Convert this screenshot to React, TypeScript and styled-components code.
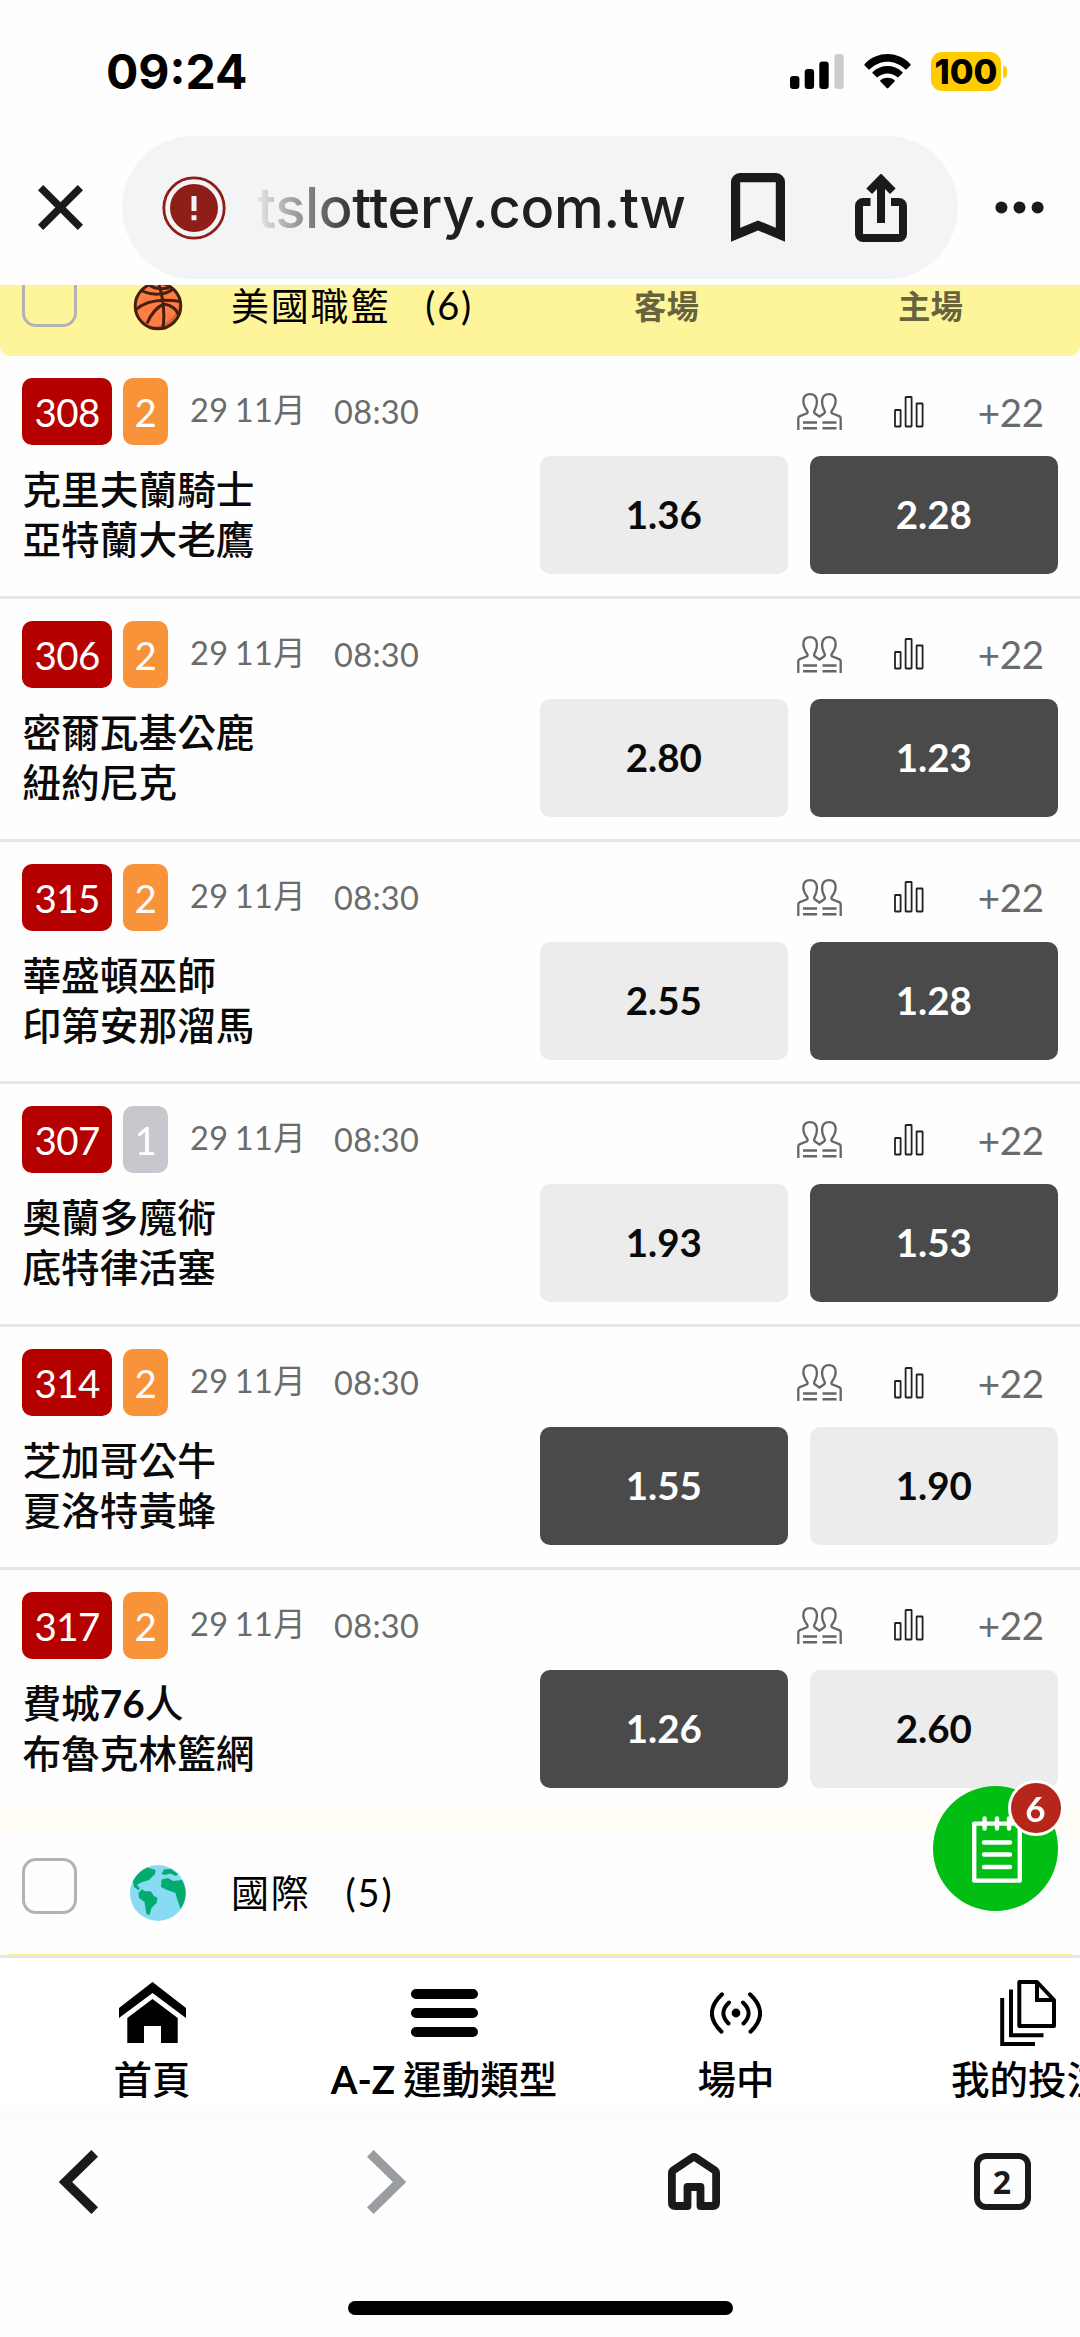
import React from 'react';
import styled, { createGlobalStyle } from 'styled-components';

const GlobalStyle = createGlobalStyle`
  * { box-sizing: border-box; }
  html, body { margin: 0; padding: 0; background: #fefefe; }
  body { font-family: Lato, "Noto Sans CJK TC", sans-serif; color: #000; overflow: hidden; }
  svg { display: block; flex: none; }
`;

const Screen = styled.div`
  width: 1080px;
  height: 2337px;
  display: flex;
  flex-direction: column;
  overflow: hidden;
  background: #fefefe;
`;

/* ---------- phone status bar ---------- */

const StatusBar = styled.header`
  height: 136px;
  flex: none;
  display: flex;
  align-items: flex-start;
  justify-content: space-between;
  padding: 42px 73px 0 106px;
`;

const Clock = styled.time`
  font: 700 48px/60px Inter, sans-serif;
`;

const StatusIcons = styled.div`
  display: flex;
  align-items: flex-start;
  padding-top: 10px;
`;

const SignalIcon = styled.svg`
  margin: 2px 20px 0 0;
`;

const WifiSvg = styled.svg`
  margin: 2px 20px 0 0;
`;

const Battery = styled.div`
  width: 70px;
  height: 39px;
  border-radius: 11px;
  background: #ffcc00;
  display: flex;
  align-items: center;
  justify-content: center;
  font: 800 34.5px/39px Inter, sans-serif;
`;

const BatteryNub = styled.div`
  width: 4px;
  height: 12px;
  margin: 14px 0 0 2px;
  border-radius: 0 6px 6px 0;
  background: #ffcc00;
`;

/* ---------- browser address bar ---------- */

const AddressBar = styled.div`
  height: 149px;
  flex: none;
  display: flex;
  align-items: flex-start;
`;

const BarButton = styled.button<{ $w: number; $pad?: number }>`
  width: ${(p) => p.$w}px;
  height: 143px;
  padding: 0 ${(p) => p.$pad ?? 0}px 0 0;
  border: 0;
  background: none;
  display: flex;
  align-items: center;
  justify-content: center;
`;

const UrlPill = styled.div`
  width: 836px;
  height: 143px;
  border-radius: 72px;
  background: #f3f4f6;
  display: flex;
  align-items: center;
  padding-left: 40px;
`;

const Url = styled.div`
  width: 428px;
  margin-left: 31px;
  font: 500 56px/80px Inter, sans-serif;
  letter-spacing: -0.35px;
  color: #1f1f1f;
  white-space: nowrap;
  mask-image: linear-gradient(90deg, rgba(0, 0, 0, 0.06), #000 105px);
`;

const PillIcon = styled.div<{ $gap: number }>`
  margin-left: ${(p) => p.$gap}px;
`;

/* ---------- page ---------- */

const Viewport = styled.main`
  height: 1670px;
  flex: none;
  overflow: hidden;
  background: #fffdf5;
`;

const LeagueHeader = styled.div<{ $active?: boolean }>`
  height: ${(p) => (p.$active ? 111 : 122.25)}px;
  margin-top: ${(p) => (p.$active ? -40 : 22)}px;
  display: flex;
  align-items: flex-start;
  padding: 26px 22px 0;
  border-radius: 11px;
  background: ${(p) => (p.$active ? '#fef49a' : '#fefefe')};
`;

const CheckBox = styled.span`
  width: 55px;
  height: 56px;
  flex: none;
  border: 3px solid #b3b3b3;
  border-radius: 14px;
`;

const SportIcon = styled.div`
  width: 56px;
  height: 56px;
  flex: none;
  margin: 7px 0 0 53px;
  display: flex;
  align-items: center;
  justify-content: center;
`;

const LeagueName = styled.div`
  margin: 15px 0 0 45px;
  width: 358px;
  flex: none;
  font-size: 38px;
  line-height: 39px;
  letter-spacing: 1.8px;
  display: flex;
  gap: 35px;
`;

const ColumnTitle = styled.div`
  width: 155px;
  flex: none;
  padding-top: 11px;
  text-align: center;
  font: 700 32.5px/50px Lato, "Noto Sans CJK TC", sans-serif;
  color: rgba(0, 0, 0, 0.6);
  & + & {
    margin-left: 109px;
  }
`;

/* top edge of the next highlighted league, just above the tab bar */
const NextLeagueEdge = styled.div`
  height: 8px;
  margin: 0 8px;
  background: #fef49a;
`;

const Match = styled.article`
  height: 242.75px;
  border-top: 3px solid #e5e6e9;
  background: #fefefe;
  padding: 22px 22.4px;
  display: flex;
  flex-direction: column;
  gap: 11px;
  &:first-of-type {
    height: 239.75px;
    border-top: 0;
    border-radius: 11px 11px 0 0;
  }
  &:last-of-type {
    border-radius: 0 0 11px 11px;
  }
`;

const MatchMeta = styled.div`
  height: 67px;
  display: flex;
  align-items: center;
`;

const Chip = styled.span<{ $bg: string; $w: number }>`
  width: ${(p) => p.$w}px;
  height: 67px;
  margin-right: 11px;
  padding-top: 2px;
  border-radius: 10px;
  background: ${(p) => p.$bg};
  color: #fff;
  font-size: 38.5px;
  line-height: 65px;
  text-align: center;
  letter-spacing: -0.6px;
`;

const DateText = styled.span`
  width: 131px;
  margin-left: 11px;
  padding-bottom: 3px;
  font-size: 32.5px;
  line-height: 40px;
  letter-spacing: 0.4px;
  word-spacing: -2.4px;
  color: #6b6b6b;
  white-space: nowrap;
`;

const TimeText = styled.span`
  margin-left: 13px;
  padding-top: 1px;
  font-size: 32.5px;
  line-height: 40px;
  letter-spacing: 0.35px;
  color: #6b6b6b;
`;

const MetaRight = styled.div`
  margin-left: auto;
  width: 261px;
  display: flex;
  align-items: center;
`;

const More = styled.span`
  margin-left: auto;
  padding: 0 14px 0 0;
  font-size: 38.5px;
  line-height: 60px;
  letter-spacing: -0.4px;
  color: #6b6b6b;
`;

const MatchBody = styled.div`
  display: flex;
  align-items: center;
  gap: 22.4px;
`;

const Teams = styled.div`
  flex: 1;
  padding-bottom: 2px;
  font-size: 38.7px;
  line-height: 50px;
  font-weight: 500;
  color: #0a0a0a;
`;

const Strong = styled.span`
  font-weight: 700;
`;

const Odd = styled.button<{ $picked?: boolean }>`
  width: 247.6px;
  height: 118px;
  padding: 0 0 2px;
  border: 0;
  border-radius: 10px;
  background: ${(p) => (p.$picked ? '#4a4a4a' : '#ececec')};
  color: ${(p) => (p.$picked ? '#fff' : '#0a0a0a')};
  font: 700 38.5px/116px Lato, sans-serif;
`;

/* ---------- floating bet slip ---------- */

const BetSlip = styled.button`
  position: fixed;
  left: 933px;
  top: 1786px;
  width: 125px;
  height: 125px;
  padding: 0;
  border: 0;
  border-radius: 50%;
  background: #00be14;
`;

const SlipIcon = styled.svg`
  margin: 2px 0 0 39px;
`;

const SlipCount = styled.span`
  position: absolute;
  right: -5.5px;
  top: -6px;
  width: 56px;
  height: 56px;
  border: 3px solid #fff;
  border-radius: 50%;
  background: #b5261b;
  color: #fff;
  font: 700 35px/51px Lato, sans-serif;
  text-align: center;
`;

/* ---------- bottom bars ---------- */

const TabBar = styled.nav`
  height: 166px;
  flex: none;
  overflow: hidden;
  display: flex;
  padding-left: 6px;
  border-top: 3px solid #e6e6e6;
  background: linear-gradient(#fff 85%, #fbfbfb);
`;

const Tab = styled.a`
  width: 292px;
  flex: none;
  display: flex;
  flex-direction: column;
  align-items: center;
  font-size: 38.5px;
  line-height: 54px;
  font-weight: 500;
  white-space: nowrap;
`;

const TabIcon = styled.span`
  height: 94px;
  padding-top: 15px;
  display: flex;
  align-items: center;
`;

const TabLabel = styled.span`
  font-family: Lato, "Noto Sans CJK TC", sans-serif;
  word-spacing: -1.5px;
`;

const BrowserBar = styled.nav`
  height: 216px;
  flex: none;
  display: flex;
  flex-direction: column;
  align-items: center;
  justify-content: space-between;
  padding: 27px 0 22px;
`;

const BrowserButtons = styled.div`
  width: 100%;
  height: 67px;
  display: flex;
  justify-content: space-between;
`;

const BrowserButton = styled.button`
  width: 156px;
  padding: 0;
  border: 0;
  background: none;
  display: flex;
  align-items: center;
  justify-content: center;
`;

const TabCount = styled.span`
  width: 57px;
  height: 57px;
  border: 6px solid #1a1a1a;
  border-radius: 12px;
  color: #1a1a1a;
  font: 700 32px/45px "Noto Sans", sans-serif;
  text-align: center;
`;

const HomeIndicator = styled.div`
  width: 385px;
  height: 14px;
  border-radius: 7px;
  background: #000;
`;

/* ---------- icons ---------- */

const Signal = () => (
  <SignalIcon width="54" height="35" viewBox="0 0 54 35">
    <rect x="0" y="22" width="9.4" height="13" rx="3.2" />
    <rect x="14.7" y="15" width="9.4" height="20" rx="3.2" />
    <rect x="29.3" y="7.5" width="9.4" height="27.5" rx="3.2" />
    <rect x="44.3" y="0" width="9.4" height="35" rx="3.2" fill="#ccc" />
  </SignalIcon>
);

const Wifi = () => (
  <WifiSvg width="47" height="36" viewBox="0 0 47 36">
    <path d="M0.6 11.4Q0 10.7 .7 10C13.5-3.2 33.5-3.2 46.3 10Q47 10.7 46.4 11.4L42.6 15.2Q41.9 15.9 41.2 15.2C31 5.2 16 5.2 5.8 15.2Q5.1 15.9 4.4 15.2Z" />
    <path d="M8.6 19.3Q7.9 18.6 8.7 17.9C17.3 10 29.7 10 38.3 17.9Q39.1 18.6 38.4 19.3L34.5 23.1Q33.9 23.7 33.2 23.1C27.5 18.2 19.5 18.2 13.8 23.1Q13.1 23.7 12.5 23.1Z" />
    <path d="M16.4 27.4Q15.8 26.7 16.6 26.1C20.8 23 26.2 23 30.4 26.1Q31.2 26.7 30.6 27.4L24.3 34Q23.5 34.8 22.7 34Z" />
  </WifiSvg>
);

const CloseIcon = () => (
  <svg width="45" height="45" viewBox="0 0 45 45" stroke="#1a1a1a" strokeWidth="7.4">
    <path d="M2.6 2.6l39.8 39.8M42.4 2.6L2.6 42.4" />
  </svg>
);

const WarningIcon = () => (
  <svg width="64" height="64" viewBox="0 0 64 64">
    <circle cx="32" cy="32" r="30.2" fill="none" stroke="#8f1d18" strokeWidth="2.8" />
    <circle cx="32" cy="32" r="24" fill="#8f1d18" />
    <path d="M29.5 20h5v15h-5zM29.5 39.2h5v5h-5z" fill="#f3f4f6" />
  </svg>
);

const BookmarkIcon = () => (
  <svg width="54" height="69" viewBox="0 0 54 69" fill="none" stroke="#1a1a1a" strokeWidth="9.2">
    <path d="M4.6 61.8V9a4.4 4.4 0 0 1 4.4-4.4h36A4.4 4.4 0 0 1 49.4 9v52.8L27 52.4z" />
  </svg>
);

const ShareIcon = () => (
  <svg width="52" height="68" viewBox="0 0 52 68" fill="none" stroke="#1a1a1a" strokeWidth="8">
    <path d="M15.5 28H8a4 4 0 0 0-4 4v28a4 4 0 0 0 4 4h36a4 4 0 0 0 4-4V32a4 4 0 0 0-4-4h-8" />
    <path d="M26 49V7M14.2 17.2L26 5.2l11.8 12" />
  </svg>
);

const DotsIcon = () => (
  <svg width="49" height="13" viewBox="0 0 49 13" fill="#1a1a1a">
    <circle cx="6.4" cy="6.5" r="6" />
    <circle cx="24.5" cy="6.5" r="6" />
    <circle cx="42.6" cy="6.5" r="6" />
  </svg>
);

const BasketballIcon = () => (
  <svg width="50" height="50" viewBox="0 0 50 50">
    <circle cx="25" cy="25" r="22.5" fill="#ff7d42" />
    <path d="M46 18C46 34 36 43 20 46C36 51 49 40 47.5 25Z" fill="#d2653a" />
    <g fill="none" stroke="#45200f" strokeWidth="3">
      <circle cx="25" cy="25" r="22.8" />
      <path d="M25.5 2C30 16 32 32 30 47.5M2.5 29C13 19 29 17.5 47.5 20.5M9 10C19 14.5 32 14.5 40 8M14 42.5C18 33 24 26 31 23C39 24 44 29 45.5 34M16.5 4C22 8.5 33 8.5 37 6" />
    </g>
  </svg>
);

const GlobeIcon = () => (
  <svg width="56" height="56" viewBox="0 0 56 56">
    <circle cx="28" cy="28" r="28" fill="#88dbf3" />
    <g fill="#04ab6e">
      <path d="M3 16C7 9 12 5 17.5 2.6L25.5 5L25 9L19 15L11 17.5L7 20L9.5 23L9 25.5L4 22Z" />
      <path d="M12 24L14 26L21 26.5L24 31L27.5 33L26.5 38L21.5 43L19.5 50L16.5 49L14.5 37L9 33L8.5 28Z" />
      <path d="M34 4.5L41 4L48 9L46 11L40 8.5L35 10L31.5 9Z" />
      <path d="M31.5 14.5L38 13L43 16L52 15Q60 30 50.5 44L47 34L45.5 28L36 24.5L31 22Z" />
    </g>
  </svg>
);

const PeopleIcon = () => (
  <svg width="45" height="37" viewBox="0 0 45 37" fill="none" stroke="#666" strokeWidth="2.3">
    <path d="M1.3 37V25.5Q1.3 23.5 3.5 22.8L9.5 20.5Q11.5 19.5 10 17.5C5 11 4.5 1.2 13 1.2S21 11 17.5 17.5Q16.5 19.5 18 20.5L22.5 23.5L27 20.5Q28.5 19.5 27.5 17.5C24 11 23.5 1.2 32 1.2S40 11 35 17.5Q33.5 19.5 35.5 20.5L41.5 22.8Q43.7 23.5 43.7 25.5V37" />
    <path d="M6 29.5h14M6 35.3h14M25.5 29.5h14M25.5 35.3h14" strokeWidth="2.6" />
  </svg>
);

const StatsSvg = styled.svg`
  margin-left: 52px;
`;

const StatsIcon = () => (
  <StatsSvg width="30" height="32" viewBox="0 0 30 32" fill="none" stroke="#222" strokeWidth="1.8">
    <rect x="1" y="14" width="5.6" height="16.5" rx=".5" />
    <rect x="11.6" y="1" width="6" height="29.5" rx=".5" />
    <rect x="22.6" y="7.5" width="6" height="23" rx=".5" />
  </StatsSvg>
);

const NotepadIcon = () => (
  <SlipIcon width="50" height="67" viewBox="0 0 50 67" fill="none" stroke="#fff" strokeWidth="4.4" strokeLinecap="round">
    <path d="M2.2 7.6h45.6v57H2.2z" strokeLinejoin="round" />
    <path d="M12.6 2.5v10M25 2.5v10M37 2.5v10" />
    <path d="M12 26.5h26M12 38.5h26M12 51h26" />
  </SlipIcon>
);

const HouseIcon = () => (
  <svg width="67" height="61" viewBox="0 0 67 61">
    <path d="M33.5 0L67 26V36L33.5 11L0 36V26Z" />
    <path d="M33.5 17L58.7 36V61H42V44H25V61H8.3V36Z" />
  </svg>
);

const MenuIcon = () => (
  <svg width="67" height="48" viewBox="0 0 67 48" stroke="#000" strokeWidth="10" strokeLinecap="round">
    <path d="M5 5h57M5 24h57M5 43h57" />
  </svg>
);

const LiveIcon = () => (
  <svg width="52" height="42" viewBox="0 0 52 42" fill="none" stroke="#000" strokeWidth="4" strokeLinecap="round">
    <path d="M12 2.3Q-8 21 11.5 39.7M40 2.3Q60 21 40.5 39.7M19 10.5Q8 21 18.5 31.5M33 10.5Q44 21 33.5 31.5" />
    <circle cx="26" cy="21" r="4.4" fill="#000" stroke="none" />
  </svg>
);

const DocsIcon = () => (
  <svg width="56" height="66" viewBox="0 0 56 66" fill="none" stroke="#000" strokeWidth="4">
    <path d="M19.3 2H37L54 20V46H19.3Z" strokeLinejoin="round" />
    <path d="M37 2V20H54" />
    <path d="M11 9.5V55.3H43.5M2.2 18V64H35" />
  </svg>
);

const Chevron = ({ color, flip }: { color: string; flip?: boolean }) => (
  <svg width="39" height="64" viewBox="0 0 39 64" fill="none" stroke={color} strokeWidth="9.4">
    <path d={flip ? 'M3.3 3.3L32.5 32L3.3 60.7' : 'M35.7 3.3L6.5 32L35.7 60.7'} />
  </svg>
);

const HomeOutlineIcon = () => (
  <svg width="52" height="57" viewBox="0 0 52 57" fill="none" stroke="#1a1a1a" strokeWidth="7.8" strokeLinejoin="round">
    <path d="M3.9 20Q3.9 18.5 5 17.6L24.5 4.5Q26 3.5 27.5 4.5L47 17.6Q48.1 18.5 48.1 20V49.5Q48.1 53 44.6 53H32.5V34H19.5V53H7.4Q3.9 53 3.9 49.5Z" />
  </svg>
);

/* ---------- data ---------- */

type Game = {
  id: string;
  min: 1 | 2;
  away: React.ReactNode;
  home: string;
  odds: [string, string];
  picked: 0 | 1;
};

const games: Game[] = [
  { id: '308', min: 2, away: '克里夫蘭騎士', home: '亞特蘭大老鷹', odds: ['1.36', '2.28'], picked: 1 },
  { id: '306', min: 2, away: '密爾瓦基公鹿', home: '紐約尼克', odds: ['2.80', '1.23'], picked: 1 },
  { id: '315', min: 2, away: '華盛頓巫師', home: '印第安那溜馬', odds: ['2.55', '1.28'], picked: 1 },
  { id: '307', min: 1, away: '奧蘭多魔術', home: '底特律活塞', odds: ['1.93', '1.53'], picked: 1 },
  { id: '314', min: 2, away: '芝加哥公牛', home: '夏洛特黃蜂', odds: ['1.55', '1.90'], picked: 0 },
  { id: '317', min: 2, away: <>費城<Strong>76</Strong>人</>, home: '布魯克林籃網', odds: ['1.26', '2.60'], picked: 0 },
];

const MatchRow = ({ game }: { game: Game }) => (
  <Match>
    <MatchMeta>
      <Chip $bg="#b50000" $w={89.6}>{game.id}</Chip>
      <Chip $bg={game.min === 2 ? '#f99339' : '#c8c7ce'} $w={45}>{game.min}</Chip>
      <DateText>29 11月</DateText>
      <TimeText>08:30</TimeText>
      <MetaRight>
        <PeopleIcon />
        <StatsIcon />
        <More>+22</More>
      </MetaRight>
    </MatchMeta>
    <MatchBody>
      <Teams>
        <div>{game.away}</div>
        <div>{game.home}</div>
      </Teams>
      <Odd $picked={game.picked === 0}>{game.odds[0]}</Odd>
      <Odd $picked={game.picked === 1}>{game.odds[1]}</Odd>
    </MatchBody>
  </Match>
);

export default function App() {
  return (
    <>
      <GlobalStyle />
      <Screen>
        <StatusBar>
          <Clock>09:24</Clock>
          <StatusIcons>
            <Signal />
            <Wifi />
            <Battery>100</Battery>
            <BatteryNub />
          </StatusIcons>
        </StatusBar>

        <AddressBar>
          <BarButton $w={122} $pad={1}><CloseIcon /></BarButton>
          <UrlPill>
            <WarningIcon />
            <Url>tslottery.com.tw</Url>
            <PillIcon $gap={46}><BookmarkIcon /></PillIcon>
            <PillIcon $gap={70}><ShareIcon /></PillIcon>
          </UrlPill>
          <BarButton $w={122}><DotsIcon /></BarButton>
        </AddressBar>

        <Viewport>
          <LeagueHeader $active>
            <CheckBox />
            <SportIcon><BasketballIcon /></SportIcon>
            <LeagueName><span>美國職籃</span><span>(6)</span></LeagueName>
            <ColumnTitle>客場</ColumnTitle>
            <ColumnTitle>主場</ColumnTitle>
          </LeagueHeader>
          <section>
            {games.map((g) => <MatchRow key={g.id} game={g} />)}
          </section>
          <LeagueHeader>
            <CheckBox />
            <SportIcon><GlobeIcon /></SportIcon>
            <LeagueName><span>國際</span><span>(5)</span></LeagueName>
          </LeagueHeader>
          <NextLeagueEdge />
        </Viewport>

        <TabBar>
          <Tab><TabIcon><HouseIcon /></TabIcon><TabLabel>首頁</TabLabel></Tab>
          <Tab><TabIcon><MenuIcon /></TabIcon><TabLabel><Strong>A-Z</Strong> 運動類型</TabLabel></Tab>
          <Tab><TabIcon><LiveIcon /></TabIcon><TabLabel>場中</TabLabel></Tab>
          <Tab><TabIcon><DocsIcon /></TabIcon><TabLabel>我的投注</TabLabel></Tab>
        </TabBar>

        <BrowserBar>
          <BrowserButtons>
            <BrowserButton><Chevron color="#1a1a1a" /></BrowserButton>
            <BrowserButton><Chevron color="#999ca1" flip /></BrowserButton>
            <BrowserButton><HomeOutlineIcon /></BrowserButton>
            <BrowserButton><TabCount>2</TabCount></BrowserButton>
          </BrowserButtons>
          <HomeIndicator />
        </BrowserBar>

        <BetSlip>
          <NotepadIcon />
          <SlipCount>6</SlipCount>
        </BetSlip>
      </Screen>
    </>
  );
}
